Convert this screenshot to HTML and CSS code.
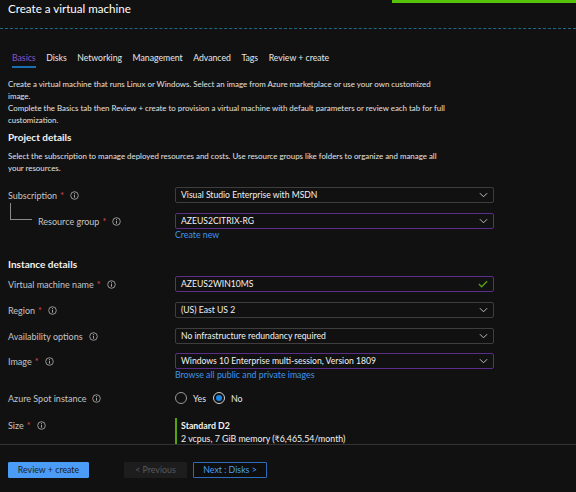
FILE: index.html
```html
<!DOCTYPE html>
<html lang="en">
<head>
<meta charset="utf-8">
<title>Create a virtual machine</title>
<link rel="stylesheet" href="styles.css">
</head>
<body>
<div class="page">
  <header class="header">
    <h1 class="title">Create a virtual machine</h1>
    <div class="toast"></div>
  </header>
  <main class="main">
    <nav class="tabs">
      <span class="tab active">Basics</span>
      <span class="tab">Disks</span>
      <span class="tab">Networking</span>
      <span class="tab">Management</span>
      <span class="tab">Advanced</span>
      <span class="tab">Tags</span>
      <span class="tab">Review + create</span>
    </nav>
    <p class="desc first">
      <span class="line">Create a virtual machine that runs Linux or Windows. Select an image from Azure marketplace or use your own customized</span>
      <span class="line">image.</span>
      <span class="line">Complete the Basics tab then Review + create to provision a virtual machine with default parameters or review each tab for full</span>
      <span class="line">customization.</span>
    </p>
    <h2 class="section">Project details</h2>
    <p class="desc sub">
      <span class="line">Select the subscription to manage deployed resources and costs. Use resource groups like folders to organize and manage all</span>
      <span class="line">your resources.</span>
    </p>

    <div class="row row-sub">
      <div class="label">Subscription <span class="req">*</span><svg class="info" viewBox="0 0 9 9"><circle cx="4.5" cy="4.5" r="3.8"/><rect x="4.05" y="2.1" width="0.9" height="0.9"/><rect x="4.05" y="3.7" width="0.9" height="3"/></svg></div>
      <div class="field">
        <div class="select"><span>Visual Studio Enterprise with MSDN</span><svg class="chev" viewBox="0 0 10 6"><path d="M1 1 L5 5 L9 1"/></svg></div>
      </div>
    </div>
    <div class="row">
      <div class="label child">Resource group <span class="req">*</span><svg class="info" viewBox="0 0 9 9"><circle cx="4.5" cy="4.5" r="3.8"/><rect x="4.05" y="2.1" width="0.9" height="0.9"/><rect x="4.05" y="3.7" width="0.9" height="3"/></svg></div>
      <div class="field">
        <div class="select focus"><span>AZEUS2CITRIX-RG</span><svg class="chev" viewBox="0 0 10 6"><path d="M1 1 L5 5 L9 1"/></svg></div>
        <a class="link">Create new</a>
      </div>
    </div>

    <h2 class="section inst">Instance details</h2>
    <div class="row row-first">
      <div class="label">Virtual machine name <span class="req">*</span><svg class="info" viewBox="0 0 9 9"><circle cx="4.5" cy="4.5" r="3.8"/><rect x="4.05" y="2.1" width="0.9" height="0.9"/><rect x="4.05" y="3.7" width="0.9" height="3"/></svg></div>
      <div class="field">
        <div class="select focus"><span>AZEUS2WIN10MS</span><svg class="check" viewBox="0 0 11 8"><path d="M1 4 L4 7 L10 1"/></svg></div>
      </div>
    </div>
    <div class="row">
      <div class="label">Region <span class="req">*</span><svg class="info" viewBox="0 0 9 9"><circle cx="4.5" cy="4.5" r="3.8"/><rect x="4.05" y="2.1" width="0.9" height="0.9"/><rect x="4.05" y="3.7" width="0.9" height="3"/></svg></div>
      <div class="field">
        <div class="select"><span>(US) East US 2</span><svg class="chev" viewBox="0 0 10 6"><path d="M1 1 L5 5 L9 1"/></svg></div>
      </div>
    </div>
    <div class="row">
      <div class="label">Availability options<svg class="info" viewBox="0 0 9 9"><circle cx="4.5" cy="4.5" r="3.8"/><rect x="4.05" y="2.1" width="0.9" height="0.9"/><rect x="4.05" y="3.7" width="0.9" height="3"/></svg></div>
      <div class="field">
        <div class="select"><span>No infrastructure redundancy required</span><svg class="chev" viewBox="0 0 10 6"><path d="M1 1 L5 5 L9 1"/></svg></div>
      </div>
    </div>
    <div class="row row-img">
      <div class="label">Image <span class="req">*</span><svg class="info" viewBox="0 0 9 9"><circle cx="4.5" cy="4.5" r="3.8"/><rect x="4.05" y="2.1" width="0.9" height="0.9"/><rect x="4.05" y="3.7" width="0.9" height="3"/></svg></div>
      <div class="field">
        <div class="select focus"><span>Windows 10 Enterprise multi-session, Version 1809</span><svg class="chev" viewBox="0 0 10 6"><path d="M1 1 L5 5 L9 1"/></svg></div>
        <a class="link">Browse all public and private images</a>
      </div>
    </div>
    <div class="row row-spot">
      <div class="label plain">Azure Spot instance<svg class="info" viewBox="0 0 9 9"><circle cx="4.5" cy="4.5" r="3.8"/><rect x="4.05" y="2.1" width="0.9" height="0.9"/><rect x="4.05" y="3.7" width="0.9" height="3"/></svg></div>
      <div class="radios">
        <span class="radio"></span><span class="radio-text">Yes</span>
        <span class="radio on"></span><span class="radio-text">No</span>
      </div>
    </div>
    <div class="row row-size">
      <div class="label plain">Size <span class="req">*</span><svg class="info" viewBox="0 0 9 9"><circle cx="4.5" cy="4.5" r="3.8"/><rect x="4.05" y="2.1" width="0.9" height="0.9"/><rect x="4.05" y="3.7" width="0.9" height="3"/></svg></div>
      <div class="size">
        <div class="size-name">Standard D2</div>
        <div class="size-desc">2 vcpus, 7 GiB memory (₹6,465.54/month)</div>
      </div>
    </div>
  </main>
  <footer class="footer">
    <button class="btn primary">Review + create</button>
    <button class="btn prev">&lt; Previous</button>
    <button class="btn next">Next : Disks &gt;</button>
  </footer>
</div>
</body>
</html>
```

FILE: styles.css
```css
html, body {
  margin: 0;
  padding: 0;
  background: #111111;
}

body {
  font-family: Lato, "Liberation Sans", sans-serif;
  color: #e6e6e6;
}

.page {
  display: flex;
  flex-direction: column;
  height: 492px;
  overflow: hidden;
  background: #111111;
}

.header {
  position: relative;
  height: 28px;
  padding: 0 8px;
  border-bottom: 1px dashed #1c6a86;
  flex: none;
}

.title {
  margin: 0;
  font-size: 11.6px;
  font-weight: 400;
  line-height: 18px;
  color: #ffffff;
}

.toast {
  position: absolute;
  top: 0;
  right: 0;
  width: 184px;
  height: 3px;
  background: #56c20c;
}

.main {
  flex: 1;
  overflow: hidden;
  padding: 0 8px;
}

.tabs {
  display: flex;
  gap: 10.5px;
  margin-top: 22px;
  padding-left: 4px;
  font-size: 8.7px;
  line-height: 14px;
}

.tab {
  padding-bottom: 1px;
  border-bottom: 2px solid transparent;
  color: #e8e8e8;
  white-space: nowrap;
}

.tab.active {
  color: #8b55c2;
  border-bottom-color: #1a6db0;
}

.desc {
  margin: 10px 0 0;
  font-size: 7.9px;
  line-height: 12px;
  color: #e2e2e2;
}

.desc.sub {
  margin-top: 6px;
}

.line {
  display: block;
  white-space: nowrap;
}

.section {
  margin: 4px 0 0;
  font-size: 10px;
  font-weight: 700;
  line-height: 14px;
  color: #f2f2f2;
}

.section.inst {
  margin-top: 16px;
}

.row {
  display: grid;
  grid-template-columns: 167px 319px;
  align-items: start;
  margin-top: 10px;
}

.row-sub {
  margin-top: 13px;
}

.row-first {
  margin-top: 5px;
}

.row-img {
  margin-top: 9px;
}

.row-spot {
  margin-top: 10px;
}

.row-size {
  margin-top: 13px;
}

.label {
  position: relative;
  display: flex;
  align-items: center;
  height: 16px;
  font-size: 9px;
  color: #c4c4c4;
  white-space: nowrap;
}

.label.plain {
  height: 14px;
}

.label.child {
  padding-left: 30px;
}

.label.child::before {
  content: "";
  position: absolute;
  left: 2px;
  top: -10px;
  width: 21px;
  height: 16px;
  border-left: 1px solid #8a8a8a;
  border-bottom: 1px solid #8a8a8a;
}

.req {
  color: #e0484e;
  margin-left: 3px;
}

.info {
  width: 9px;
  height: 9px;
  margin-left: 6px;
  flex: none;
}

.info circle {
  fill: none;
  stroke: #b5b5b5;
  stroke-width: 0.8;
}

.info rect {
  fill: #b5b5b5;
}

.field {
  display: flex;
  flex-direction: column;
}

.select {
  box-sizing: border-box;
  height: 16px;
  display: flex;
  align-items: center;
  justify-content: space-between;
  padding: 0 5px 0 5px;
  border: 1px solid #3e3e3e;
  border-radius: 2px;
  background: #111111;
  font-size: 8.6px;
  color: #f2f2f2;
  white-space: nowrap;
}

.select.focus {
  border-color: #5b2d88;
}

.chev {
  width: 9px;
  height: 6px;
  flex: none;
}

.chev path {
  fill: none;
  stroke: #cfcfcf;
  stroke-width: 1;
}

.check {
  width: 10px;
  height: 8px;
  flex: none;
}

.check path {
  fill: none;
  stroke: #5aa312;
  stroke-width: 1.4;
}

.link {
  font-size: 8.8px;
  line-height: 12px;
  color: #3f95ea;
  white-space: nowrap;
}

.radios {
  display: flex;
  align-items: center;
  height: 14px;
  font-size: 8.8px;
  color: #e6e6e6;
}

.radio {
  box-sizing: border-box;
  width: 12px;
  height: 12px;
  border: 1px solid #9a9a9a;
  border-radius: 50%;
  display: flex;
  align-items: center;
  justify-content: center;
}

.radio.on {
  border-color: #cfcfcf;
  margin-left: 7px;
}

.radio.on::after {
  content: "";
  width: 6px;
  height: 6px;
  border-radius: 50%;
  background: #1a86e8;
}

.radio-text {
  margin-left: 6px;
}

.size {
  border-left: 2px solid #57a30c;
  padding-left: 4px;
  padding-top: 1px;
  font-size: 8.8px;
  line-height: 13px;
  color: #f2f2f2;
}

.size-name {
  font-weight: 700;
}

.footer {
  flex: none;
  box-sizing: border-box;
  height: 48px;
  border-top: 1px solid #333333;
  padding: 17px 8px 0;
  display: flex;
  align-items: flex-start;
  background: #111111;
}

.btn {
  box-sizing: border-box;
  height: 16px;
  padding: 0;
  border: 1px solid transparent;
  border-radius: 1px;
  font-family: Lato, "Liberation Sans", sans-serif;
  font-size: 8.8px;
  line-height: 14px;
  cursor: pointer;
}

.btn.primary {
  width: 81px;
  background: #4a9cf6;
  border-color: #4a9cf6;
  color: #1b1f26;
}

.btn.prev {
  width: 63px;
  margin-left: 35px;
  background: #1d1d1d;
  border-color: #1d1d1d;
  color: #595959;
}

.btn.next {
  width: 74px;
  margin-left: 6px;
  background: #0e0e0e;
  border-color: #2e6bb8;
  color: #4d9ff2;
}
```
